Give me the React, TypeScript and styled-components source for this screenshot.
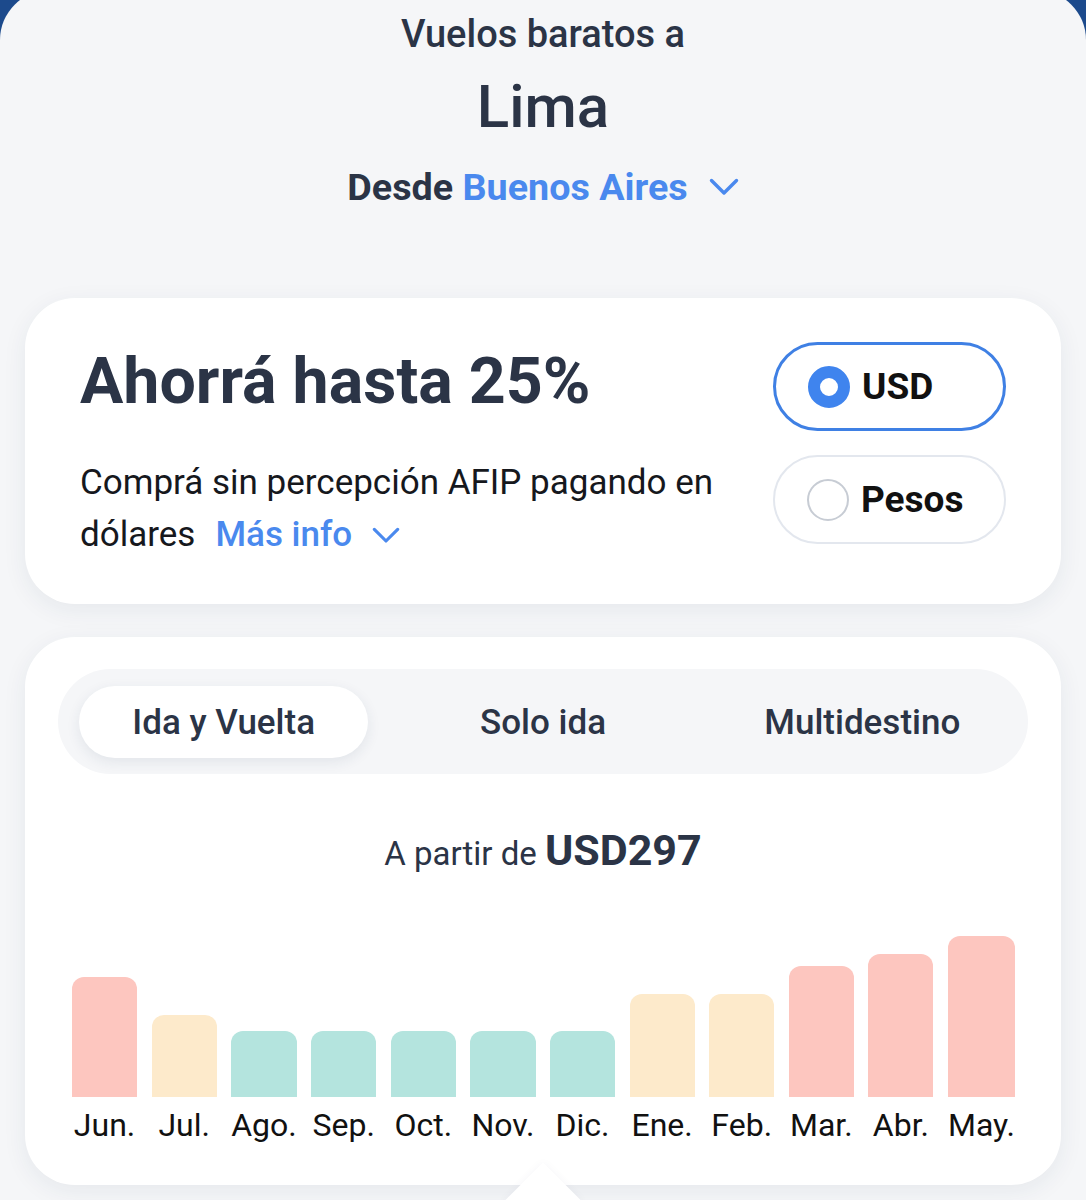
import styled, { createGlobalStyle } from "styled-components";

const GlobalStyle = createGlobalStyle`
  html, body {
    margin: 0;
    padding: 0;
    background: #1c4a8c;
  }
  body {
    font-family: Roboto, "Noto Sans", Arial, sans-serif;
    -webkit-font-smoothing: antialiased;
  }
`;

const navy = "#2b3446";
const blue = "#4a89ee";

const Sheet = styled.div`
  margin: -10px 0 0;
  min-height: 1210px;
  box-sizing: border-box;
  padding: 22px 25px 0;
  background: #f5f6f8;
  border-radius: 50px 50px 0 0;
  overflow: hidden;
`;

const Header = styled.header`
  display: flex;
  flex-direction: column;
  align-items: center;
  color: ${navy};
`;

const Kicker = styled.div`
  font-size: 38px;
  line-height: 44px;
  font-weight: 500;
`;

const City = styled.h1`
  margin: 15px 0 0;
  font-size: 60px;
  line-height: 72px;
  font-weight: 500;
`;

const Origin = styled.div`
  margin-top: 22px;
  display: flex;
  align-items: center;
  gap: 21px;
  font-size: 37.7px;
  line-height: 44px;
  font-weight: 700;

  & b {
    color: ${blue};
    font-weight: 700;
  }
`;

const Card = styled.section`
  position: relative;
  background: #fff;
  border-radius: 50px;
  box-shadow: 0 6px 24px rgba(30, 50, 90, 0.07);
`;

const PromoCard = styled(Card)`
  margin-top: 89px;
  display: grid;
  grid-template-columns: 1fr 233px;
  column-gap: 30px;
  padding: 44px 55px 43px;
`;

const PromoTitle = styled.h2`
  margin: 0;
  font-size: 64.5px;
  line-height: 78px;
  font-weight: 700;
  color: ${navy};
`;

const PromoText = styled.p`
  margin: 37px 0 0;
  font-size: 35px;
  line-height: 52px;
  color: #16181d;
`;

const MoreInfo = styled.span`
  margin-left: 20px;
  display: inline-flex;
  align-items: center;
  gap: 20px;
  color: ${blue};
  font-weight: 500;
`;

const Currencies = styled.div`
  display: flex;
  flex-direction: column;
  gap: 24px;
`;

const CurrencyPill = styled.div<{ $active?: boolean }>`
  height: 89px;
  box-sizing: border-box;
  display: flex;
  align-items: center;
  gap: 12px;
  padding-left: 32px;
  border-radius: 45px;
  border: ${(p) => (p.$active ? `3px solid #3f80e4` : `2.5px solid #e3e7ee`)};
  font-size: 37px;
  font-weight: 700;
  color: #111;
`;

const Radio = styled.span<{ $active?: boolean }>`
  width: 42px;
  height: 42px;
  box-sizing: border-box;
  border-radius: 50%;
  border: ${(p) => (p.$active ? `12px solid #3f84ee` : `2.5px solid #c7ccd4`)};
  background: #fff;
`;

const ChartCard = styled(Card)`
  margin-top: 33px;
  padding: 32px 33px 40px;
`;

const Tabs = styled.div`
  display: grid;
  grid-template-columns: repeat(3, 1fr);
  column-gap: 30px;
  padding: 17px 21px 16px;
  background: #f5f6f8;
  border-radius: 53px;
`;

const Tab = styled.div<{ $active?: boolean }>`
  height: 72px;
  display: flex;
  align-items: center;
  justify-content: center;
  border-radius: 36px;
  font-size: 35px;
  font-weight: 500;
  color: ${navy};
  background: ${(p) => (p.$active ? "#fff" : "transparent")};
  box-shadow: ${(p) => (p.$active ? "0 4px 14px rgba(30, 50, 90, 0.09)" : "none")};
`;

const Price = styled.div`
  margin-top: 51px;
  text-align: center;
  font-size: 33px;
  line-height: 50px;
  color: ${navy};

  & strong {
    font-size: 43px;
    font-weight: 700;
  }
`;

const Chart = styled.div`
  margin-top: 57px;
  padding: 0 13px 0 14px;
  display: grid;
  grid-template-columns: repeat(12, 1fr);
  column-gap: 14.5px;
  align-items: end;
`;

const Month = styled.div`
  display: flex;
  flex-direction: column;
  align-items: center;
`;

const Bar = styled.div<{ $tone: "high" | "mid" | "low" }>`
  align-self: stretch;
  border-radius: 12px 12px 0 0;
  background: ${(p) =>
    p.$tone === "high" ? "#fdc6bf" : p.$tone === "mid" ? "#fdeacb" : "#b4e4de"};
`;

const MonthLabel = styled.div`
  margin: 10px 0 2px;
  font-size: 32px;
  line-height: 36px;
  color: #111;
  white-space: nowrap;
`;

const Pointer = styled.div`
  position: absolute;
  left: 50%;
  bottom: -45px;
  width: 56px;
  height: 56px;
  margin-left: -28px;
  background: #fff;
  transform: rotate(45deg);
  box-shadow: 0 0 10px rgba(30, 50, 90, 0.04);
`;

const Chevron = ({ color, size = 30 }: { color: string; size?: number }) => (
  <svg width={size} height={size * 0.6} viewBox="0 0 30 18" fill="none">
    <path
      d="M2.5 2.5 L15 15 L27.5 2.5"
      stroke={color}
      strokeWidth="3.4"
      strokeLinecap="round"
      strokeLinejoin="round"
    />
  </svg>
);

const months: { name: string; height: number; tone: "high" | "mid" | "low" }[] = [
  { name: "Jun.", height: 120, tone: "high" },
  { name: "Jul.", height: 82, tone: "mid" },
  { name: "Ago.", height: 66, tone: "low" },
  { name: "Sep.", height: 66, tone: "low" },
  { name: "Oct.", height: 66, tone: "low" },
  { name: "Nov.", height: 66, tone: "low" },
  { name: "Dic.", height: 66, tone: "low" },
  { name: "Ene.", height: 103, tone: "mid" },
  { name: "Feb.", height: 103, tone: "mid" },
  { name: "Mar.", height: 131, tone: "high" },
  { name: "Abr.", height: 143, tone: "high" },
  { name: "May.", height: 161, tone: "high" },
];

export default function App() {
  return (
    <>
      <GlobalStyle />
      <Sheet>
        <Header>
          <Kicker>Vuelos baratos a</Kicker>
          <City>Lima</City>
          <Origin>
            <span>
              Desde <b>Buenos Aires</b>
            </span>
            <Chevron color={blue} />
          </Origin>
        </Header>

        <PromoCard>
          <div>
            <PromoTitle>Ahorrá hasta 25%</PromoTitle>
            <PromoText>
              Comprá sin percepción AFIP pagando en dólares
              <MoreInfo>
                Más info
                <Chevron color={blue} size={28} />
              </MoreInfo>
            </PromoText>
          </div>
          <Currencies>
            <CurrencyPill $active>
              <Radio $active />
              USD
            </CurrencyPill>
            <CurrencyPill>
              <Radio />
              Pesos
            </CurrencyPill>
          </Currencies>
        </PromoCard>

        <ChartCard>
          <Tabs>
            <Tab $active>Ida y Vuelta</Tab>
            <Tab>Solo ida</Tab>
            <Tab>Multidestino</Tab>
          </Tabs>
          <Price>
            A partir de <strong>USD297</strong>
          </Price>
          <Chart>
            {months.map((m) => (
              <Month key={m.name}>
                <Bar $tone={m.tone} style={{ height: m.height }} />
                <MonthLabel>{m.name}</MonthLabel>
              </Month>
            ))}
          </Chart>
          <Pointer />
        </ChartCard>
      </Sheet>
    </>
  );
}
